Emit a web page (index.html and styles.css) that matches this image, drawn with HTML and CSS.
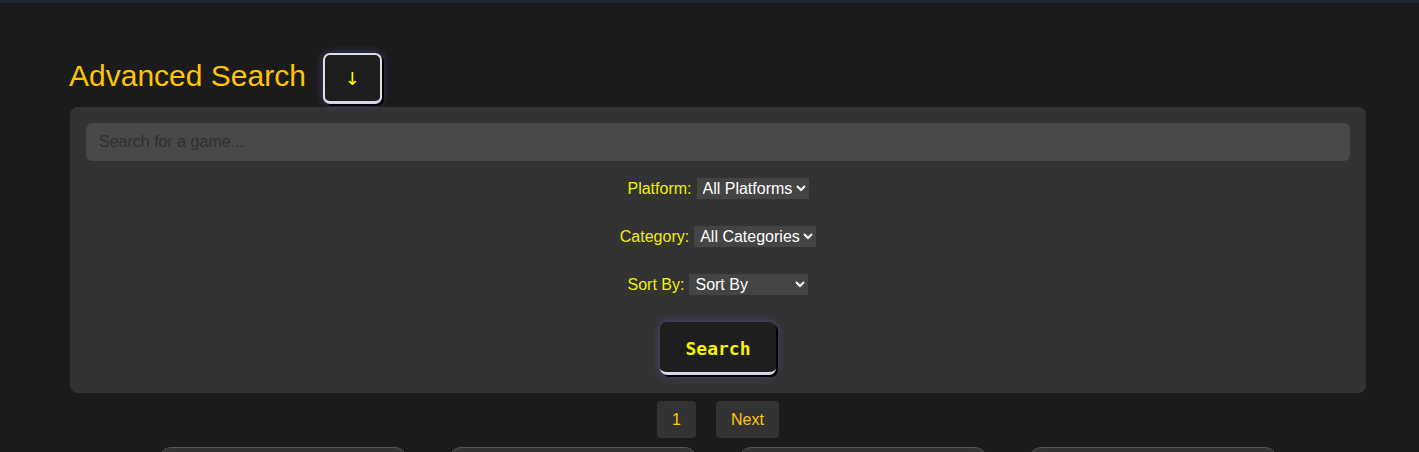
FILE: index.html
```html
<!DOCTYPE html>
<html lang="en">
<head>
<meta charset="utf-8">
<title>Advanced Search</title>
<link rel="stylesheet" href="styles.css">
</head>
<body>
<div class="topbar"></div>
<main class="main">
  <div class="header">
    <h1 class="title">Advanced Search</h1>
    <button class="toggle">↓</button>
  </div>
  <form class="panel">
    <input class="search-input" type="text" placeholder="Search for a game...">
    <div class="row">
      <label class="label">Platform:</label>
      <select class="select">
        <option>All Platforms</option>
        <option>PC</option>
        <option>Browser</option>
      </select>
    </div>
    <div class="row">
      <label class="label">Category:</label>
      <select class="select">
        <option>All Categories</option>
        <option>MMORPG</option>
        <option>Shooter</option>
      </select>
    </div>
    <div class="row">
      <label class="label">Sort By:</label>
      <select class="select">
        <option>Sort By</option>
        <option>Release Date</option>
        <option>Popularity</option>
        <option>Alphabetical</option>
      </select>
    </div>
    <button class="search-btn" type="button">Search</button>
  </form>
  <div class="pagination">
    <button class="page-btn">1</button>
    <button class="page-btn">Next</button>
  </div>
  <div class="cards">
    <div class="card"></div>
    <div class="card"></div>
    <div class="card"></div>
    <div class="card"></div>
  </div>
</main>
</body>
</html>
```
FILE: styles.css
```css
html, body {
  margin: 0;
  padding: 0;
  background: #1b1b1b;
  font-family: "Liberation Sans", Arial, sans-serif;
}

.topbar {
  height: 3px;
  background: #21252e;
}

.main {
  padding: 50px 53px 0 70px;
}

.header {
  display: flex;
  align-items: center;
  gap: 17px;
  margin-bottom: 3px;
}

.title {
  margin: 0 0 6px -1px;
  font-size: 30px;
  font-weight: normal;
  color: #ffc600;
}

.toggle {
  box-sizing: border-box;
  width: 59px;
  height: 51px;
  background: #1e1e1e;
  color: #ffff00;
  font-family: "DejaVu Sans", sans-serif;
  font-size: 18px;
  border: 2px solid #dedee8;
  border-bottom: 3px solid #d4d4ec;
  border-radius: 7px;
  box-shadow: 2px 2px 0 #000, 0 0 9px rgba(110, 110, 230, 0.45);
  padding: 0;
}

.panel {
  box-sizing: border-box;
  background: #333333;
  border-radius: 8px;
  padding: 16px 16px 18px;
  display: flex;
  flex-direction: column;
  align-items: center;
}

.search-input {
  box-sizing: border-box;
  width: 100%;
  height: 38px;
  background: #484848;
  border: none;
  border-radius: 6px;
  padding: 0 13px;
  font-family: "Liberation Sans", Arial, sans-serif;
  font-size: 16px;
  color: #fff;
  margin-bottom: 17px;
  outline: none;
}

.search-input::placeholder {
  color: #2f2f2f;
}

.row {
  display: flex;
  align-items: center;
  gap: 5px;
  height: 21px;
  margin-bottom: 27px;
}

.label {
  font-size: 16px;
  color: #f0f000;
}

.select {
  height: 21px;
  background: #444444;
  color: #ffffff;
  border: none;
  border-radius: 0;
  font-family: "Liberation Sans", Arial, sans-serif;
  font-size: 16px;
  padding: 0 0 0 2px;
}

.search-btn {
  box-sizing: border-box;
  width: 116px;
  height: 53px;
  padding: 3px 0 0;
  background: #1e1e1e;
  color: #f5f500;
  font-family: "DejaVu Sans Mono", monospace;
  font-size: 18px;
  font-weight: bold;
  border: none;
  border-bottom: 3px solid #d6d6ee;
  border-radius: 7px;
  box-shadow: 2px 2px 0 #000, 0 0 10px rgba(100, 100, 220, 0.5);
}

.pagination {
  display: flex;
  justify-content: center;
  gap: 20px;
  margin-top: 8px;
}

.page-btn {
  background: #333333;
  color: #ffc600;
  border: none;
  border-radius: 4px;
  font-family: "Liberation Sans", Arial, sans-serif;
  font-size: 16px;
  padding: 9px 15px;
  height: 37px;
}

.cards {
  display: flex;
  justify-content: center;
  gap: 42px;
  margin-top: 9px;
}

.card {
  width: 248px;
  height: 300px;
  box-sizing: border-box;
  background: #333333;
  border: 1px solid #555555;
  border-radius: 12px;
}
```
